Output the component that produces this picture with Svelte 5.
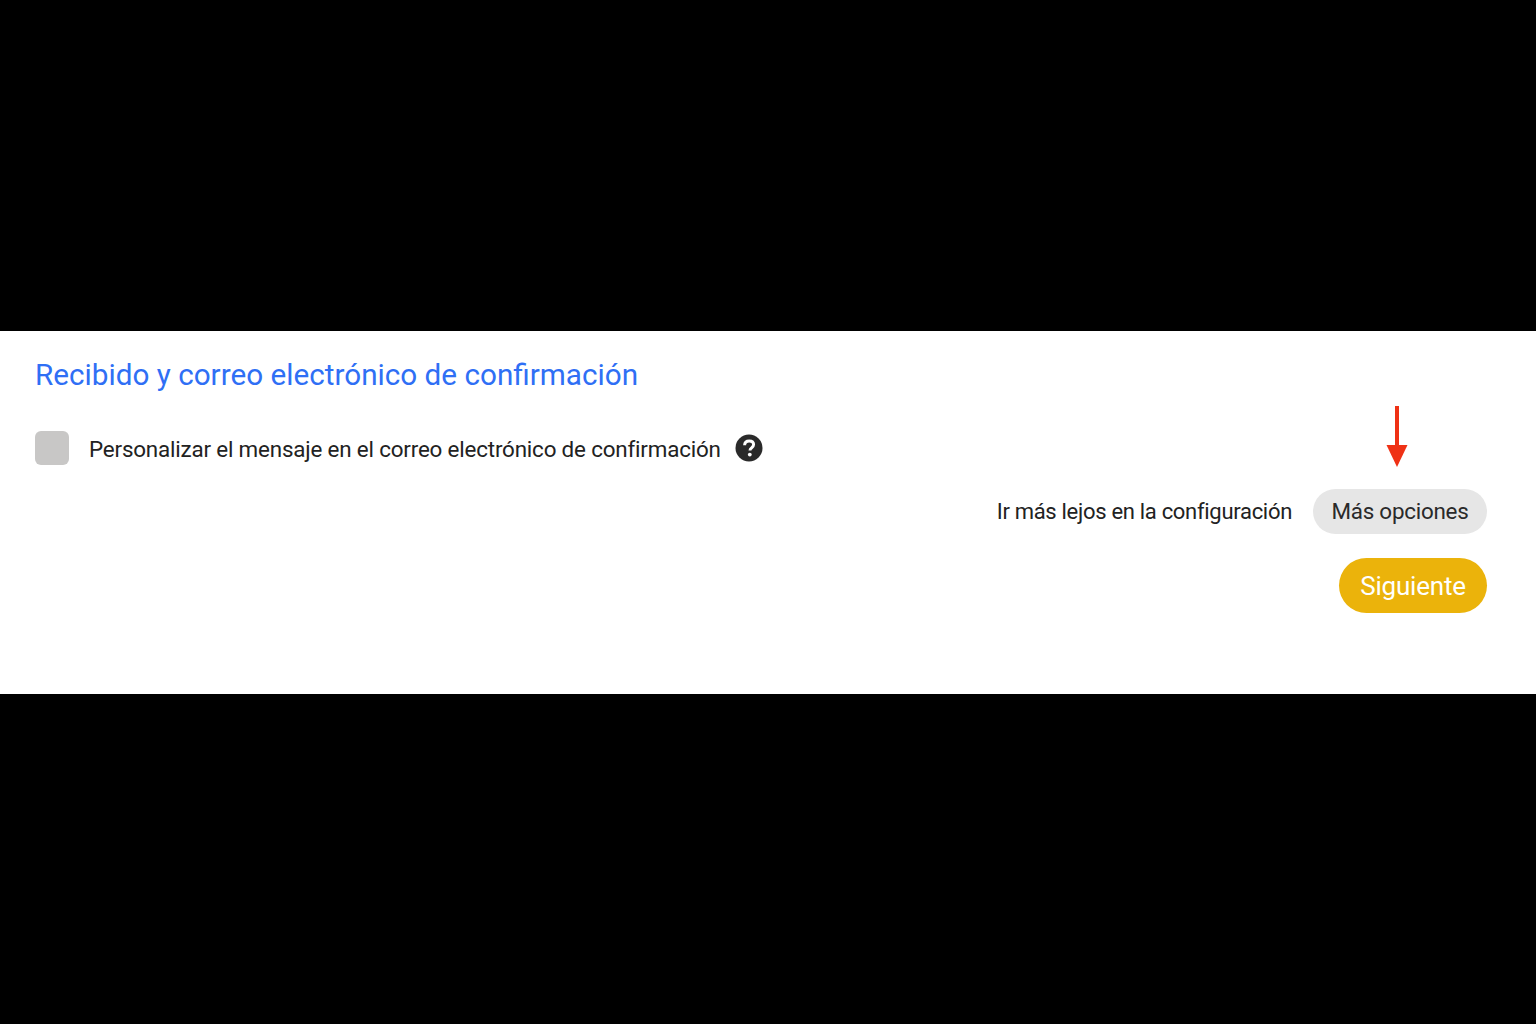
<script>
  let customize = $state(false)
</script>

<div class="screen">
  <section class="panel">
    <h2>Recibido y correo electrónico de confirmación</h2>

    <div class="check-row">
      <button class="check" class:on={customize} aria-label="Personalizar" onclick={() => (customize = !customize)}></button>
      <span class="check-label">Personalizar el mensaje en el correo electrónico de confirmación</span>
      <svg class="help" width="28" height="28" viewBox="0 0 28 28" aria-hidden="true">
        <circle cx="14" cy="14" r="13.5" fill="#2a2a2a" />
        <path d="M9.6 11.2c.1-2.800 2.100-4.300 4.600-4.300 2.700 0 4.400 1.500 4.400 3.700 0 1.600-.9 2.500-2.100 3.300-1.100.7-1.500 1.200-1.500 2.500" fill="none" stroke="#fff" stroke-width="3" />
        <circle cx="14.800" cy="20.600" r="1.900" fill="#fff" />
      </svg>
    </div>

    <div class="actions">
      <div class="more-row">
        <span class="more-label">Ir más lejos en la configuración</span>
        <div class="more-wrap">
          <svg class="arrow" width="24" height="62" viewBox="0 0 24 62" aria-hidden="true">
            <rect x="10" y="0" width="4" height="40" fill="#ef3115" />
            <path d="M1.500 39H22.500L12 61Z" fill="#ef3115" />
          </svg>
          <button class="more">Más opciones</button>
        </div>
      </div>
      <button class="next">Siguiente</button>
    </div>
  </section>
</div>

<style>
  :global(body) {
    background: #000;
  }

  .screen {
    height: 1024px;
    display: flex;
    flex-direction: column;
    padding-top: 331px;
    box-sizing: border-box;
    font-family: Roboto, "Liberation Sans", sans-serif;
  }

  .panel {
    height: 363px;
    box-sizing: border-box;
    background: #fff;
    padding: 27px 49px 0 35px;
  }

  h2 {
    margin: 0;
    font-size: 29.7px;
    line-height: 34px;
    font-weight: 400;
    color: #2f6ff5;
  }

  .check-row {
    display: flex;
    align-items: center;
    margin-top: 39px;
  }

  .check {
    width: 34px;
    height: 34px;
    padding: 0;
    border: none;
    border-radius: 6px;
    background: #c8c7c6;
    cursor: pointer;
  }

  .check.on {
    background: #2f6ff5;
  }

  .check-label {
    margin-left: 20px;
    margin-top: 2px;
    font-size: 22.4px;
    letter-spacing: -0.18px;
    color: #222;
  }

  .help {
    margin-left: 14px;
  }

  .actions {
    display: flex;
    flex-direction: column;
    align-items: flex-end;
    gap: 24px;
    margin-top: 24px;
  }

  .more-row {
    display: flex;
    align-items: center;
    gap: 21px;
  }

  .more-label {
    font-size: 22px;
    letter-spacing: -0.3px;
    color: #222;
  }

  .more-wrap {
    position: relative;
  }

  .arrow {
    position: absolute;
    left: 72px;
    top: -83px;
  }

  .more {
    width: 174px;
    height: 45px;
    padding: 0 0 2px;
    border: none;
    border-radius: 23px;
    background: #e6e6e6;
    color: #2a2a2a;
    font: inherit;
    font-size: 22.4px;
    letter-spacing: -0.25px;
    cursor: pointer;
  }

  .next {
    width: 148px;
    height: 55px;
    padding: 0;
    border: none;
    border-radius: 28px;
    background: #ebb30b;
    color: #fff;
    font: inherit;
    font-size: 26px;
    letter-spacing: -0.2px;
    cursor: pointer;
  }
</style>
